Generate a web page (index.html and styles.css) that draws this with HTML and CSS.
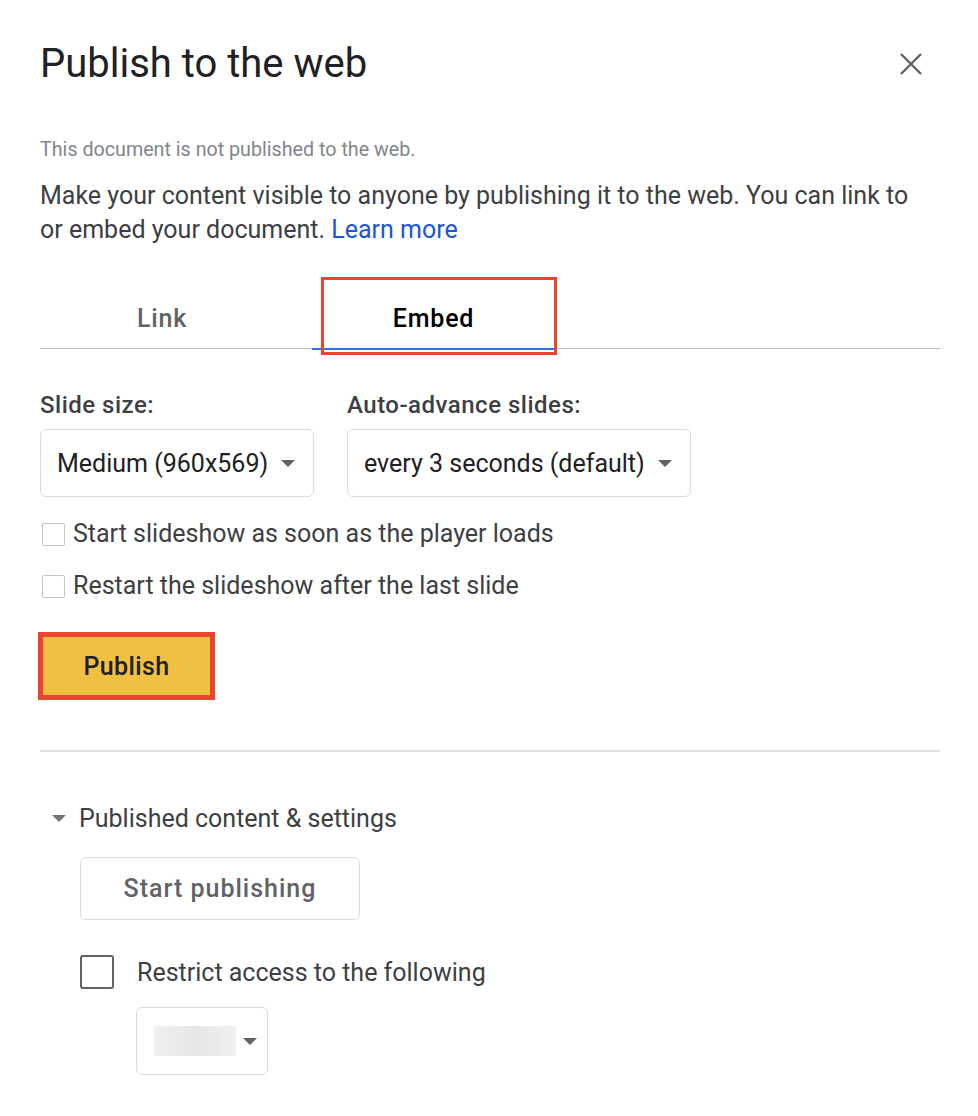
FILE: index.html
```html
<!DOCTYPE html>
<html>
<head>
<meta charset="utf-8">
<link rel="stylesheet" href="styles.css">
</head>
<body>
<div class="dialog">
  <div class="header">
    <h1 class="title">Publish to the web</h1>
    <svg class="close" width="24" height="24" viewBox="0 0 24 24"><path d="M2 2L22 22M22 2L2 22" stroke="#5f6368" stroke-width="2.4" fill="none"/></svg>
  </div>
  <p class="status">This document is not published to the web.</p>
  <p class="intro">Make your content visible to anyone by publishing it to the web. You can link to or embed your document. <a class="learn">Learn more</a></p>

  <div class="tabs">
    <div class="tab tab-link">Link</div>
    <div class="tab tab-embed">Embed<span class="highlight"></span></div>
  </div>

  <div class="fields">
    <div class="field">
      <div class="label">Slide size:</div>
      <div class="select select-size"><span>Medium (960x569)</span><span class="caret"></span></div>
    </div>
    <div class="field">
      <div class="label">Auto-advance slides:</div>
      <div class="select select-adv"><span>every 3 seconds (default)</span><span class="caret"></span></div>
    </div>
  </div>

  <div class="checks">
    <label class="check"><span class="box"></span>Start slideshow as soon as the player loads</label>
    <label class="check"><span class="box"></span>Restart the slideshow after the last slide</label>
  </div>

  <div class="publish-wrap"><button class="publish">Publish</button></div>

  <div class="divider"></div>

  <div class="section-head"><span class="caret caret-sec"></span>Published content &amp; settings</div>
  <div class="section-body">
    <button class="start">Start publishing</button>
    <div class="restrict"><span class="box2"></span>Restrict access to the following</div>
    <div class="select select-small"><span class="blur"></span><span class="caret"></span></div>
  </div>
</div>
</body>
</html>
```

FILE: styles.css
```css
* { box-sizing: border-box; }
body {
  margin: 0;
  background: #fff;
  font-family: Roboto, "Liberation Sans", sans-serif;
  color: #3c4043;
}
.dialog {
  width: 978px;
  padding: 0 38px 0 40px;
}
.header {
  display: flex;
  justify-content: space-between;
  align-items: flex-start;
  height: 138px;
  padding-top: 38px;
}
.title {
  margin: 0;
  font-family: Roboto, sans-serif;
  font-weight: 400;
  font-size: 40px;
  line-height: 52px;
  color: #202124;
}
.close {
  margin-top: 14px;
  margin-right: 17px;
}
.status {
  margin: 0;
  font-size: 19.7px;
  line-height: 24px;
  color: #80868b;
}
.intro {
  margin: 17px 0 0;
  max-width: 885px;
  font-size: 25px;
  line-height: 34px;
  color: #3c4043;
}
.learn { color: #1a56d6; text-decoration: none; }
.tabs {
  display: flex;
  margin-top: 40px;
  height: 62px;
  border-bottom: 1.5px solid #bdbdbd;
}
.tab {
  position: relative;
  display: flex;
  align-items: center;
  justify-content: center;
  font-size: 25px;
  font-weight: 500;
  letter-spacing: 0.8px;
  padding-top: 2px;
}
.tab-link { width: 244px; color: #5f6368; margin-right: 28px; }
.tab-embed { width: 243px; color: #000; border-bottom: 2px solid #2f6fe4; margin-bottom: -1.5px; }
.highlight {
  position: absolute;
  left: 9px;
  right: -2px;
  top: -10.5px;
  bottom: -7.5px;
  border: 3px solid #e8442f;
}
.fields {
  display: flex;
  gap: 33px;
  margin-top: 42px;
}
.label {
  font-size: 24px;
  font-weight: 500;
  letter-spacing: 0.5px;
  color: #3c4043;
  line-height: 28px;
}
.select {
  display: flex;
  align-items: center;
  margin-top: 10px;
  height: 68px;
  border: 1.5px solid #dadce0;
  border-radius: 6px;
  font-size: 25px;
  color: #202124;
  padding: 0 16px;
  gap: 12px;
}
.select-size { width: 274px; }
.select-adv { width: 344px; }
.caret {
  width: 0; height: 0;
  border-left: 7px solid transparent;
  border-right: 7px solid transparent;
  border-top: 7px solid #5f6368;
  margin-left: 1px;
}
.checks { margin-top: 10px; }
.check {
  display: flex;
  align-items: center;
  font-size: 25px;
  color: #3c4043;
  height: 52px;
}
.box {
  width: 23px; height: 23px;
  border: 1.5px solid #c4c4c4;
  border-radius: 2px;
  margin: 3px 8px 0 2px;
  flex: none;
}
.publish-wrap { margin-top: 21px; }
.publish {
  width: 177px;
  height: 68px;
  margin-left: -2px;
  background: #f1bf42;
  border: 5px solid #e8442f;
  font-family: Roboto, sans-serif;
  font-size: 25px;
  font-weight: 500;
  letter-spacing: 0.4px;
  color: #202124;
  padding: 0;
}
.divider {
  margin-top: 50px;
  height: 1.5px;
  background: #e0e0e0;
}
.section-head {
  display: flex;
  align-items: center;
  margin-top: 51.5px;
  padding-left: 12px;
  font-size: 25px;
  color: #3c4043;
  height: 30px;
}
.caret-sec { margin: 0 13px 0 0; border-top-color: #757575; }
.section-body { padding-left: 40px; }
.start {
  display: block;
  margin-top: 24px;
  width: 280px;
  height: 63px;
  background: #fff;
  border: 1.5px solid #dadce0;
  border-radius: 6px;
  font-family: Roboto, sans-serif;
  font-size: 25px;
  font-weight: 500;
  letter-spacing: 1px;
  color: #5f6368;
  padding: 0;
}
.restrict {
  display: flex;
  align-items: center;
  margin-top: 35px;
  font-size: 25px;
  color: #3c4043;
  height: 34px;
}
.box2 {
  width: 34px; height: 34px;
  border: 2px solid #5f6368;
  border-radius: 3px;
  margin-right: 23px;
  flex: none;
}
.select-small {
  margin-left: 56px;
  margin-top: 18px;
  width: 132px;
  height: 68px;
  padding: 0 0 0 17px;
  gap: 6px;
}
.blur {
  width: 82px; height: 30px;
  background: linear-gradient(90deg, #f1f1f1, #e6e6e6 50%, #f1f1f1);
}
```
